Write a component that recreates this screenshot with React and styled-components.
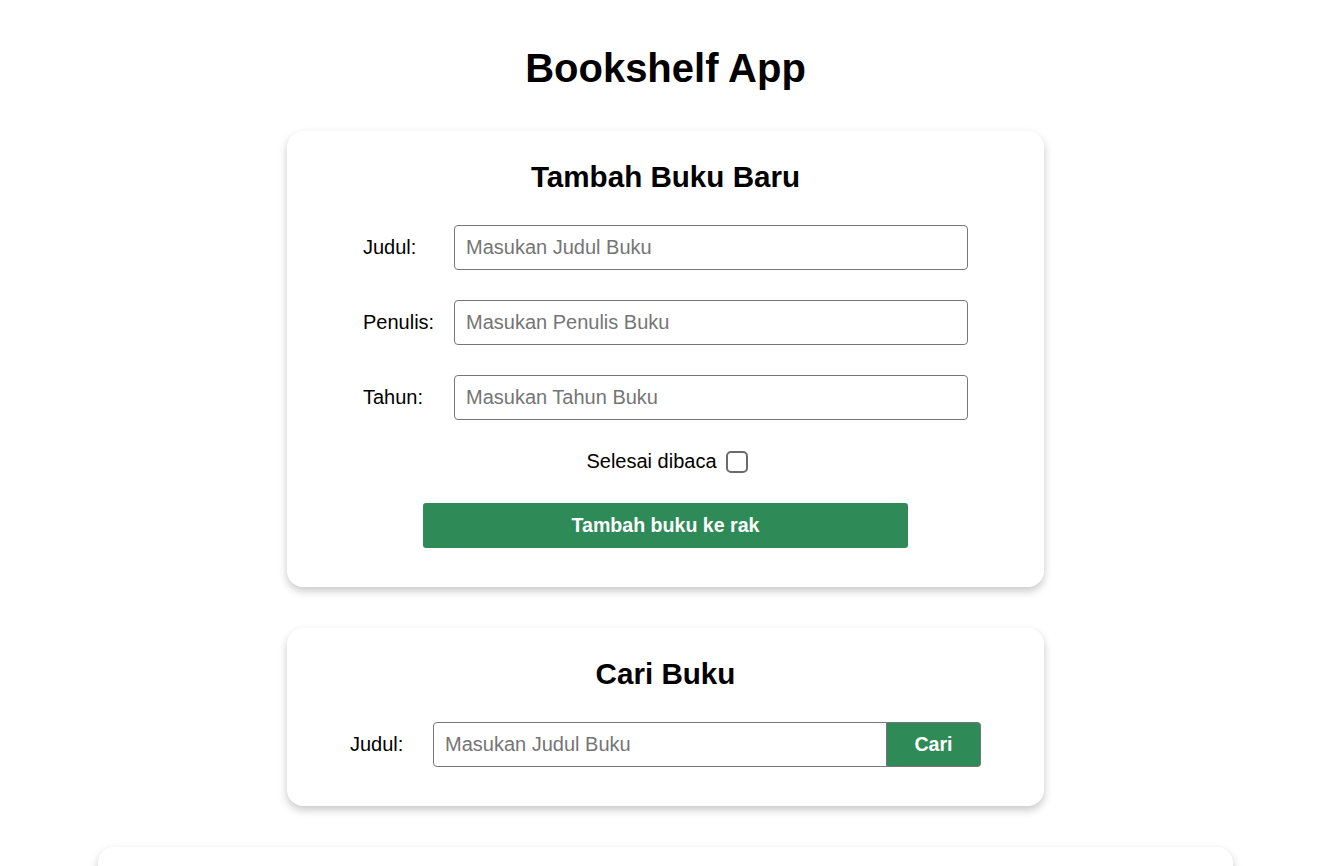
import React from "react";
import styled, { createGlobalStyle } from "styled-components";

const GlobalStyle = createGlobalStyle`
  html, body {
    margin: 0;
    padding: 0;
    background: #ffffff;
    font-family: "Liberation Sans", Arial, sans-serif;
    color: #000;
  }
  * { box-sizing: border-box; }
`;

const Page = styled.main`
  display: flex;
  flex-direction: column;
  align-items: center;
  padding: 45px 7px 40px 0;
  gap: 41px;
`;

const AppTitle = styled.h1`
  margin: 0 0 -1px;
  font-size: 40px;
  line-height: 46px;
  font-weight: 700;
`;

const Card = styled.section`
  width: ${(p) => (p.$wide ? "1135px" : "757px")};
  min-height: ${(p) => (p.$wide ? "200px" : "auto")};
  background: #fff;
  border-radius: 16px;
  box-shadow: 0 4px 8px rgba(0, 0, 0, 0.22);
  padding: 29px 40px 39px;
  display: flex;
  flex-direction: column;
  align-items: center;
  gap: 30px;
`;

const CardTitle = styled.h2`
  margin: 0 0 1px;
  font-size: 29.6px;
  line-height: 34px;
  font-weight: 700;
  text-align: center;
`;

const FieldRow = styled.div`
  display: grid;
  grid-template-columns: ${(p) => p.$cols};
  align-items: center;
`;

const Label = styled.label`
  font-size: 20px;
  line-height: 23px;
`;

const TextInput = styled.input`
  height: 45px;
  width: 100%;
  padding: 0 11px;
  font-family: "Liberation Sans", Arial, sans-serif;
  font-size: 20px;
  color: #000;
  border: 1px solid #767676;
  border-radius: ${(p) => (p.$joined ? "4px 0 0 4px" : "4px")};
  outline: none;
  background: #fff;

  &::placeholder {
    color: #757575;
  }
`;

const CheckRow = styled.label`
  display: flex;
  align-items: center;
  gap: 9px;
  font-size: 20px;
  line-height: 23px;
  margin-left: 3px;
`;

const CheckBox = styled.input`
  appearance: none;
  width: 22px;
  height: 22px;
  margin: 0;
  border: 2px solid #6b6b6b;
  border-radius: 5px;
  background: #fff;
`;

const SubmitButton = styled.button`
  width: 485px;
  height: 45px;
  border: none;
  border-radius: 3px;
  background: #2e8b57;
  color: #fff;
  font-family: "Liberation Sans", Arial, sans-serif;
  font-size: 19.6px;
  font-weight: 700;
  cursor: pointer;
`;

const SearchButton = styled.button`
  height: 45px;
  border: 1px solid #767676;
  border-left: none;
  border-radius: 0 4px 4px 0;
  background: #2e8b57;
  color: #fff;
  font-family: "Liberation Sans", Arial, sans-serif;
  font-size: 19.6px;
  font-weight: 700;
  cursor: pointer;
`;

const fields = [
  { id: "judul", label: "Judul:", placeholder: "Masukan Judul Buku" },
  { id: "penulis", label: "Penulis:", placeholder: "Masukan Penulis Buku" },
  { id: "tahun", label: "Tahun:", placeholder: "Masukan Tahun Buku" },
];

export default function App() {
  return (
    <>
      <GlobalStyle />
      <Page>
        <AppTitle>Bookshelf App</AppTitle>

        <Card>
          <CardTitle>Tambah Buku Baru</CardTitle>
          {fields.map((f) => (
            <FieldRow key={f.id} $cols="91px 514px">
              <Label htmlFor={f.id}>{f.label}</Label>
              <TextInput id={f.id} placeholder={f.placeholder} />
            </FieldRow>
          ))}
          <CheckRow>
            Selesai dibaca
            <CheckBox type="checkbox" />
          </CheckRow>
          <SubmitButton type="button">Tambah buku ke rak</SubmitButton>
        </Card>

        <Card>
          <CardTitle>Cari Buku</CardTitle>
          <FieldRow $cols="83px 454px 94px">
            <Label htmlFor="cari">Judul:</Label>
            <TextInput id="cari" $joined placeholder="Masukan Judul Buku" />
            <SearchButton type="button">Cari</SearchButton>
          </FieldRow>
        </Card>

        <Card $wide />
      </Page>
    </>
  );
}
